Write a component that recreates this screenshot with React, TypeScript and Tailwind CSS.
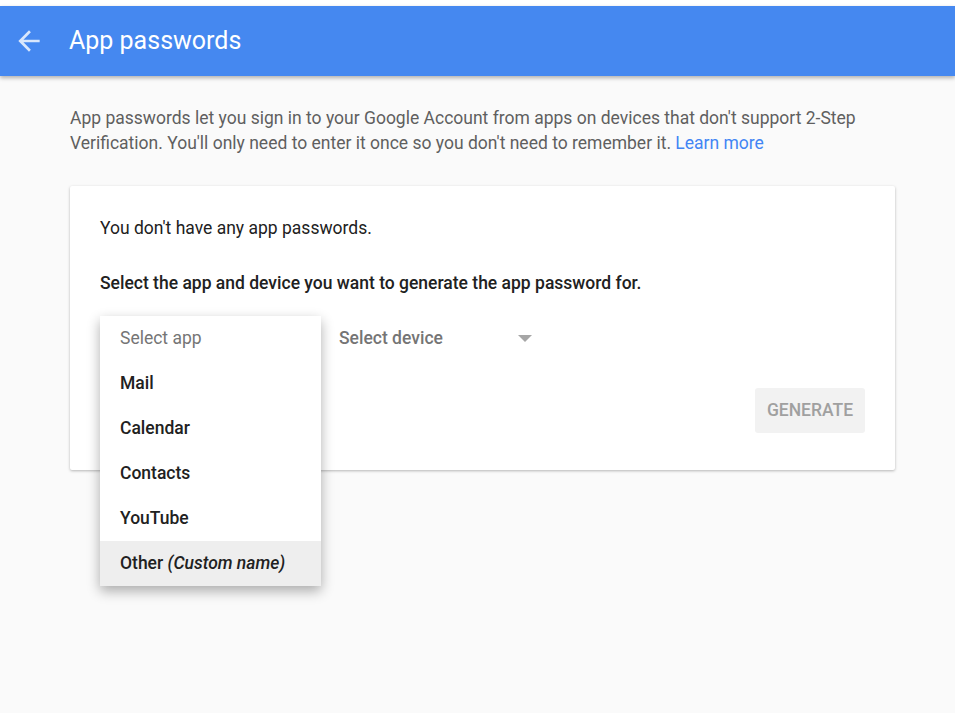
import React from "react";

export default function App() {
  const items = ["Mail", "Calendar", "Contacts", "YouTube"];
  return (
    <div className="min-h-[713px] w-[955px] bg-[#fafafa] font-['Roboto',sans-serif]">
      <div className="h-[6px] bg-white" />
      <header className="flex h-[70px] items-center bg-[#4588f0] shadow-[0_2px_4px_rgba(0,0,0,0.3)]">
        <svg className="ml-[13px] h-[32px] w-[32px] opacity-80" viewBox="0 0 24 24" fill="white">
          <path d="M20 11H7.83l5.59-5.59L12 4l-8 8 8 8 1.41-1.41L7.83 13H20v-2z" />
        </svg>
        <h1 className="ml-[24px] text-[25px] font-normal text-white">App passwords</h1>
      </header>
      <main className="ml-[70px] w-[825px] pt-[30px]">
        <p className="text-[17.5px] leading-[25px] text-[#5f5f5f]">
          App passwords let you sign in to your Google Account from apps on devices that don't support 2-Step
          Verification. You'll only need to enter it once so you don't need to remember it.{" "}
          <a className="text-[#4285f4]">Learn more</a>
        </p>
        <section className="relative mt-[30px] rounded-[2px] bg-white px-[30px] pb-[37px] pt-[30px] shadow-[0_1px_3px_rgba(0,0,0,0.28)]">
          <p className="text-[17.5px] leading-[24px] text-[#212121]">You don't have any app passwords.</p>
          <p className="mt-[31px] text-[17.5px] font-medium leading-[24px] text-[#212121]">
            Select the app and device you want to generate the app password for.
          </p>
          <div className="mt-[21px] flex h-[45px] items-center">
            <div className="w-[221px]" />
            <div className="ml-[18px] flex w-[193px] items-center justify-between">
              <span className="text-[17.5px] font-medium text-[#757575]">Select device</span>
              <svg className="h-[7px] w-[14px]" viewBox="0 0 14 7">
                <path d="M0 0h14L7 7z" fill="#a6a6a6" />
              </svg>
            </div>
          </div>
          <div className="mt-[27px] flex justify-end">
            <button className="h-[45px] w-[110px] rounded-[3px] bg-[#f2f2f2] text-[17.5px] font-medium text-[#a0a0a0]">
              GENERATE
            </button>
          </div>
          <div className="absolute left-[30px] top-[130px] w-[221px] bg-white shadow-[0_5px_12px_rgba(0,0,0,0.32)]">
            <div className="flex h-[45px] items-center px-[20px] text-[17.5px] text-[#757575]">Select app</div>
            {items.map((it) => (
              <div key={it} className="flex h-[45px] items-center px-[20px] text-[17.5px] font-medium text-[#212121]">
                {it}
              </div>
            ))}
            <div className="flex h-[45px] items-center bg-[#eeeeee] px-[20px] text-[17.5px] font-medium text-[#212121]">
              Other&nbsp;<i className="font-medium">(Custom name)</i>
            </div>
          </div>
        </section>
      </main>
    </div>
  );
}
